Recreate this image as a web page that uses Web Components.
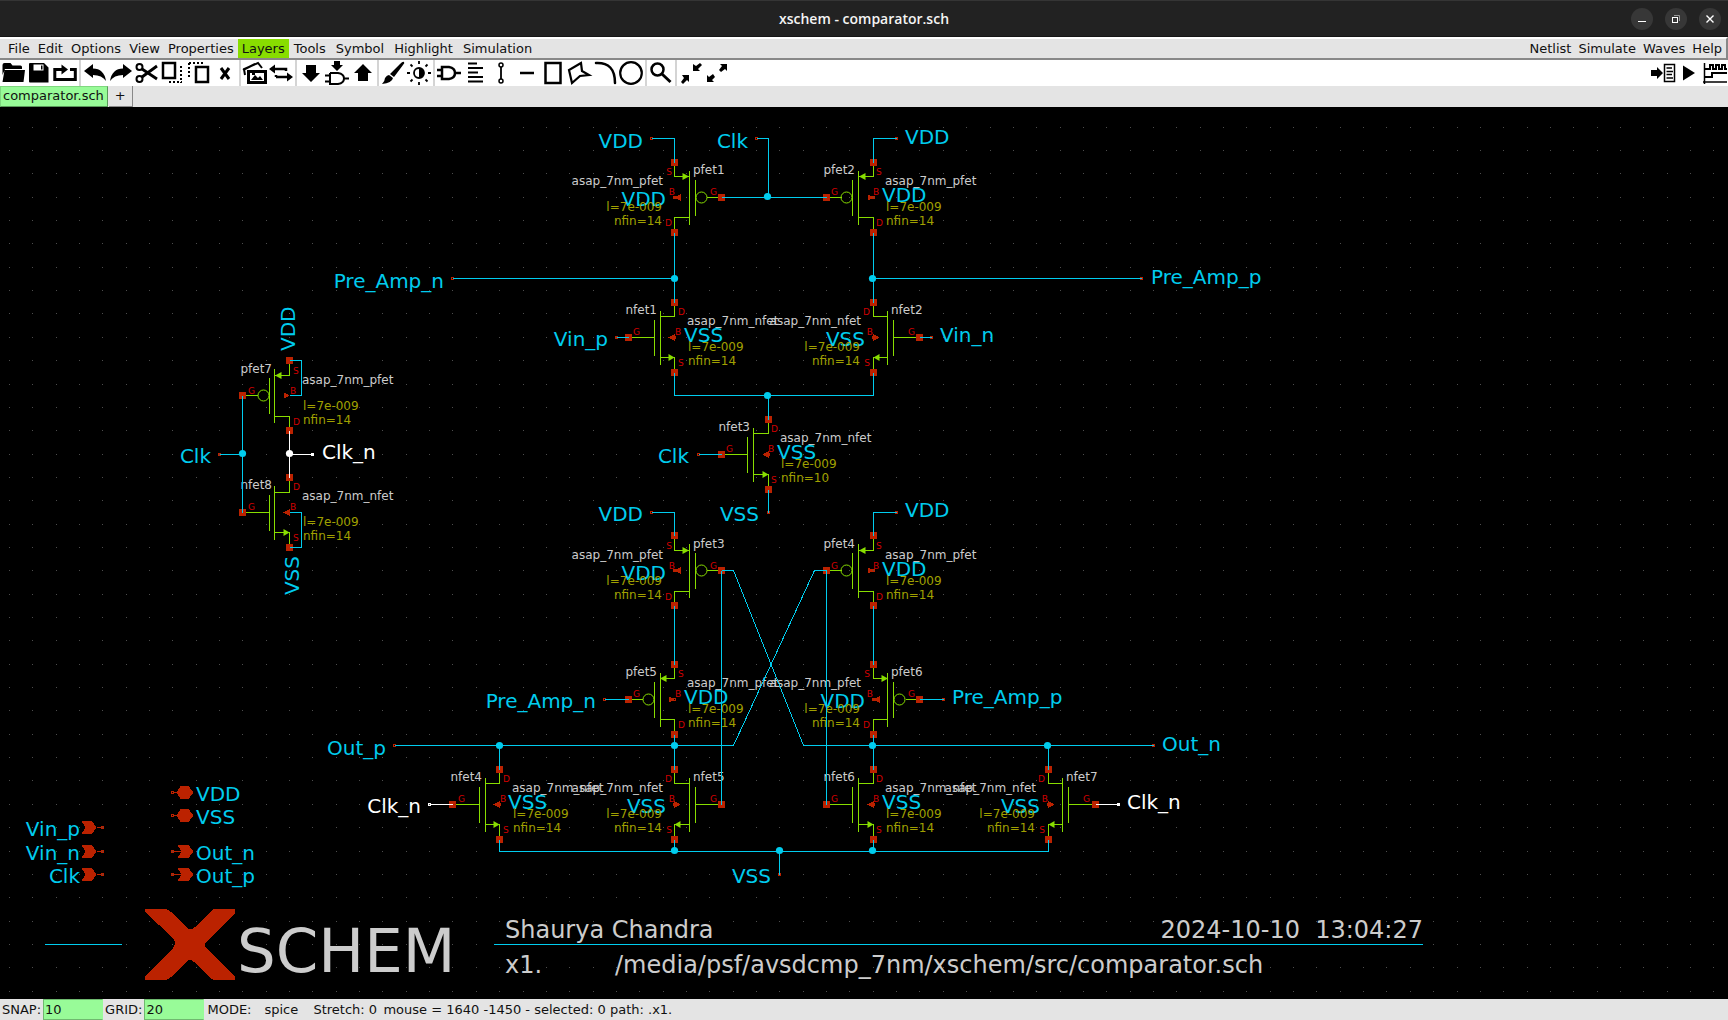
<!DOCTYPE html>
<html lang="en">
<head>
<meta charset="utf-8">
<title>xschem - comparator.sch</title>
<style>
  html, body { margin: 0; height: 100%; background: #000; }
  body { font: 13px/18px "DejaVu Sans", sans-serif; color: #111; }
</style>
</head>
<body>
<xs-window>
  <xs-titlebar>xschem - comparator.sch</xs-titlebar>
  <xs-menubar></xs-menubar>
  <xs-toolbar></xs-toolbar>
  <xs-tabs></xs-tabs>
  <xs-schematic></xs-schematic>
  <xs-status></xs-status>
</xs-window>

<script>
function define(name, css, html) {
  customElements.define(name, class extends HTMLElement {
    constructor() {
      super();
      const root = this.attachShadow({ mode: 'open' });
      root.innerHTML = '<style>:host,*{box-sizing:border-box}' + css + '</style>' + (typeof html === 'function' ? html() : html);
    }
  });
}

define('xs-window', `:host{display:flex;flex-direction:column;height:100vh;overflow:hidden}`, `<slot></slot>`);

/* ---------- title bar ---------- */
define('xs-titlebar', `
  :host{display:grid;grid-template-columns:1fr auto 1fr;align-items:center;flex:none;height:37px;background:#222;border-top:1px solid #353535;border-bottom:1px solid #161616;color:#f4f4f4}
  h1{grid-column:2;margin:0;font:600 14px/20px "Open Sans","Noto Sans",sans-serif}
  div{justify-self:end;display:flex;gap:12px;padding-right:7px}
  button{width:22px;height:22px;padding:0;border:0;border-radius:50%;background:#373737}
  svg{display:block}`,
  `<h1><slot></slot></h1><div>
  <button aria-label="Minimize"><svg width="22" height="22"><path d="M7 13.5h8" stroke="#fff"/></svg></button>
  <button aria-label="Restore"><svg width="22" height="22" fill="none"><path d="M9 7.5h5.5V13" stroke="#999"/><rect x="7.500" y="9.500" width="5" height="5" stroke="#fff"/></svg></button>
  <button aria-label="Close"><svg width="22" height="22"><path d="M7.500 7.500l7 7m0-7l-7 7" stroke="#fff" stroke-width="1.400"/></svg></button></div>`);

/* ---------- menus ---------- */
define('xs-menubar', `
  :host{display:flex;justify-content:space-between;flex:none;height:23px;background:#e4e4e4;border-top:2px solid #fff;border-bottom:2px solid #888;border-right:2px solid #888}
  nav{display:flex;padding-left:4px}
  button{border:0;padding:0 4px;background:none;color:#111;font:13px/19px "DejaVu Sans",sans-serif}
  .on{background:#8d0}
  .on~button{padding:0 5px}
  nav+nav{padding:0 1px 0 0}
  nav+nav button{padding:0 3px 0 4px}`,
  () => {
    const m = s => s.split(' ').map(t => `<button class="${t === 'Layers' ? 'on' : ''}">${t}</button>`).join('');
    return `<nav>${m('File Edit Options View Properties Layers Tools Symbol Highlight Simulation')}</nav><nav>${m('Netlist Simulate Waves Help')}</nav>`;
  });

/* ---------- tool buttons, 24x24 drawings ---------- */
const icons = {
  Open: '<path fill="#000" stroke="none" d="M1.500 4q0-2 2-2h6l2 2.500h8q1.500 0 1.500 1.500v2H4L1.500 14zM3.500 9H24l-1.500 12H1.500z"/>',
  Save: '<path fill="#000" stroke="none" fill-rule="evenodd" d="M3 2h14l4.500 4.500V21.500H3q-1 0-1-1V3q0-1 1-1zM6.500 3.500v6h10v-6zM14 4.500h1.500v4H14z"/>',
  Reload: '<path stroke-width="3" d="M9 8.500H1.800v10h20.500v-10H17"/><path stroke="none" fill="#000" d="M8.500 3.500l6.500 5-6.500 5z"/>',
  '|1': '',
  Undo: '<path stroke="none" fill="#000" d="M1 10l9-7v4.500q11 0 13 12.500-4-6-13-6V17z"/>',
  Redo: '<path stroke="none" fill="#000" d="M23 10l-9-7v4.500Q3 7.500 1 20q4-6 13-6V17z"/>',
  Cut: '<circle cx="4.500" cy="6" r="3" stroke-width="2"/><circle cx="4.500" cy="18" r="3" stroke-width="2"/><path stroke-width="2.800" d="M7 8l15 10M7 16L22 5"/>',
  Copy: '<rect x="2" y="2" width="12" height="15"/><path stroke-width="2" stroke-dasharray="2 2" d="M20 5v17M8 21h13"/>',
  Move: '<rect x="9" y="6" width="12" height="15"/><path stroke-width="2" stroke-dasharray="2 2" d="M2 2v15M2 2h14"/>',
  Delete: '<path stroke-width="3" d="M8 7l8 11M16 7L8 18"/>',
  '|2': '',
  Pictures: '<path stroke-width="2" d="M2 14L1 8l14-6 4 5M0 9l12-6"/><path stroke="none" fill="#000" fill-rule="evenodd" d="M4 9h20v14H4zM7 12v8h14v-8zM8 19l4-5 3 3 2-2 3 4zM9 12h3v2H9z"/>',
  Swap: '<path stroke-width="2.500" d="M5 8h12v2M7 16h12M7 16v-2"/><path stroke="none" fill="#000" d="M0 8l6-4.500v9zM24 16l-6-4.500v9z"/>',
  '|3': '',
  Descend: '<path stroke="none" fill="#000" d="M7 4h10v8h4l-9 9-9-9h4z"/>',
  'Descend symbol': '<path stroke="none" fill="#000" d="M9 0h6v4h3l-6 6-6-6h3z"/><path stroke-width="2" d="M5 12v12M5 12h8q6 1 6 5.500T13 23H5M0 14.500h5M0 20.500h5M19 17.500h5"/>',
  Ascend: '<path stroke="none" fill="#000" d="M7 20h10v-8h4l-9-9-9 9h4z"/>',
  '|4': '',
  Paint: '<path stroke="none" fill="#000" d="M23 1q1 1-1 3l-9 12-4-3L19 3q3-3 4-2zM8 14l4 3q-1 5-11 6 3-3 3-6 2-3 4-3z"/>',
  Contrast: '<circle cx="12" cy="12" r="5" stroke-width="1.800"/><path stroke="none" fill="#000" d="M12 7a5 5 0 010 10z"/><path stroke-width="1.800" d="M12 0v3M12 21v3M0 12h3M21 12h3M3.500 3.500l2 2M18.500 18.500l2 2M3.500 20.500l2-2M18.500 5.500l2-2"/>',
  '|5': '',
  Symbol: '<path d="M5 6v12h7q6-1 6-6t-6-6zM0 9h5M0 15h5M18 12h6"/>',
  Text: '<path stroke-width="2" d="M5 2.500h9M5 7h15M5 11.500h10M5 16h15M5 20.500h15"/>',
  Wire: '<circle cx="12" cy="4" r="2" stroke-width="1.500"/><circle cx="12" cy="20" r="2" stroke-width="1.500"/><path stroke-width="1.800" d="M12 6v12"/>',
  Line: '<path d="M5 12h14"/>',
  Rectangle: '<rect x="4.500" y="2" width="15" height="20"/>',
  Polygon: '<path stroke-width="2.200" d="M14 2L2 9l3 13 8-7 9-1-7-4z"/>',
  Arc: '<path d="M3 2Q22 1 22 22" stroke-linecap="round"/>',
  Circle: '<circle cx="12" cy="12" r="10.800" stroke-width="2.200"/>',
  '|6': '',
  Zoom: '<circle cx="8.500" cy="8.500" r="6"/><path stroke-width="3" d="M13 13l8.500 8"/>',
  '|7': '',
  'Zoom full': '<path stroke="none" fill="#000" d="M3 14h7v7l-2-2-4 4-2-2 3-4zM14 3v7h7l-2-2 4-4-2-2-4 3z"/>',
  'Zoom out': '<path stroke="none" fill="#000" d="M15 3h7v7l-2-2-4 3-2-2 3-4zM2 14v7h7l-2-2 3-3-2-3-4 3z"/>'
};
const runIcons = {
  Netlist: '<path stroke="none" fill="#000" d="M0 9h6V6l6 6-6 6v-3H0z"/><rect x="13.500" y="3.500" width="10" height="17" stroke-width="1.500"/><path stroke-width="1.500" d="M15.500 7H21M15.500 10.500H22M15.500 13.500H21M15.500 17H22"/>',
  Simulate: '<path stroke="none" fill="#000" d="M6 4.500l12 7.500-12 7.500z"/>',
  Waves: '<path stroke-width="1.500" d="M1.500 2v21M0 21h24"/><path stroke-width="2" d="M1 8h6V4h3v4h3V4h3v4h3V4h3v4h2M1 16h8v-4h15"/>'
};
define('xs-toolbar', `
  :host{display:flex;justify-content:space-between;flex:none;height:26px;background:#fff}
  div{display:flex}
  button{width:26px;height:26px;padding:1px;border:0;background:none}
  i{width:2px;margin:0 1px;background:#d4d4d4}
  svg{display:block;fill:none;stroke:#000;stroke-width:2.500;overflow:visible}`,
  () => {
    const draw = set => Object.entries(set).map(([n, d]) => n[0] === '|' ? '<i></i>' :
      `<button aria-label="${n}"><svg width="24" height="24" viewBox="0 0 24 24">${d}</svg></button>`).join('');
    return `<div>${draw(icons)}</div><div>${draw(runIcons)}</div>`;
  });

/* ---------- tabs ---------- */
define('xs-tabs', `
  :host{display:flex;gap:1px;flex:none;height:21px;background:#e4e4e4}
  button{border:1px solid;border-width:0 1px 1px 0;border-color:#888;background:#e4e4e4;color:#111;font:13px/18px "DejaVu Sans",sans-serif}
  button.on{background:#98fb98;border-width:1px;border-color:#7fd87f #5a9a5a #5a9a5a #7fd87f;padding:0 3px 2px 2px}
  button:last-child{padding:0 6px}`,
  `<button class="on">comparator.sch</button><button aria-label="New tab">+</button>`);

/* ---------- status ---------- */
define('xs-status', `
  :host{display:flex;align-items:center;flex:none;height:21px;background:#e4e4e4;white-space:pre}
  label{padding:0 2px}
  input{width:60px;height:21px;padding:0 1px;border:1px solid #6fb96f;border-right-color:#98fb98;background:#98fb98;color:#111;font:13px/18px "DejaVu Sans",sans-serif;border-radius:0}
  .m{width:60px;padding-left:3px}.s{width:49px}.t{width:70px}`,
  `<label for="s">SNAP:</label><input id="s" value="10"><label for="g">GRID:</label><input id="g" value="20"><span class="m">MODE:</span><span class="s">spice</span><span class="t">Stretch: 0</span><span>mouse = 1640 -1450 - selected: 0 path: .x1.</span>`);

/* ---------- schematic ---------- */
const G = 11.675, X = k => 9.3 + G * k, Y = k => 20.15 + G * k, F = Math.floor;
const out = { grid: '', shape: '', wire: '', dot: '', text: '' };
const line = (pts, cls) => `<polyline class="${cls}" points="${pts.map(p => (F(p[0]) + .5) + ',' + (F(p[1]) + .5)).join(' ')}"/>`;
const text = (x, y, s, cls, end) => `<text x="${Math.round(x)}" y="${Math.round(y)}" class="${cls}${end ? ' e' : ''}">${s}</text>`;
const box = (x, y) => `<rect class="r" x="${F(x) - 3}" y="${F(y) - 3}" width="7" height="7"/>`;
const pin = (x, y, cls = 'p') => `<rect class="${cls}" x="${F(X(x)) - .5}" y="${F(Y(y)) - .5}" width="2" height="2"/>`;
const poly = (x, y, pts, cls) => `<polygon class="${cls}" points="${pts.map(p => (x + p[0]) + ',' + (y + p[1])).join(' ')}"/>`;

function wire(...a) {
  const cls = typeof a[0] === 'string' ? a.shift() : 'w', pts = [];
  for (let i = 0; i < a.length; i += 2) pts.push([X(a[i]), Y(a[i + 1])]);
  out.wire += line(pts, cls);
}
function dot(x, y, cls = 'd') {
  out.dot += `<circle class="${cls}" cx="${F(X(x) - 3.5) + 3.5}" cy="${F(Y(y) - 3.5) + 3.5}" r="3.600"/>`;
}
function label(x, y, s, left, cls = 'l', p = 'p') {
  out.text += pin(x, y, p) + text(X(x) + (left ? -8.75 : 8.75), Y(y) + (left ? 9 : 5), s, cls, left);
}
/* dir 1: gate on the left, dir -1: gate on the right */
function fet(name, x, y, dir, nfin = 14, body = true) {
  const p = name[0] === 'p', cx = X(x), cy = Y(y), m = v => cx + v * dir, flip = dir < 0;
  let s = '';
  s += line([[cx, cy - 35], [cx, cy - 20.4], [m(-14.6), cy - 20.4]], 'g');
  s += line([[m(-14.6), cy + 20.4], [cx, cy + 20.4], [cx, cy + 35]], 'g');
  s += line([[m(-14.6), cy - 27], [m(-14.6), cy + 27]], 'g');
  s += line([[m(-20.4), cy - 18], [m(-20.4), cy + 18]], 'g');
  s += line([[m(-4 * G), cy], [m(p ? -32 : -20.4), cy]], 'g');
  if (p) s += `<circle class="g" cx="${F(m(-26.3)) + .5}" cy="${F(cy) + .5}" r="5.500"/>`;
  const px = F(cx) + .5, py = F(cy) + .5, q = v => v * dir;
  s += p ? poly(px, F(cy - 20.4) + .5, [[q(-14.5), 0], [q(-8), -3.5], [q(-8), 3.5]], 'gf')
         : poly(px, F(cy + 20.4) + .5, [[q(0), 0], [q(-6), -3.5], [q(-6), 3.5]], 'gf');
  s += p ? poly(px, py, [[q(0), 0], [q(-6), -3.5], [q(-6), 3.5]], 'r') : poly(px, py, [[q(-6), 0], [q(0.5), -3.5], [q(0.5), 3.5]], 'r');
  s += box(cx, cy - 3 * G) + box(cx, cy + 3 * G) + box(m(-4 * G), cy);
  out.shape += s;
  const t = (dx, dy, str, cls, rev) => text(m(dx), cy + dy, str, cls, flip !== !!rev);
  if (body) label(x, y, p ? 'VDD' : 'VSS', flip);
  out.text += t(3, -22, p ? 'S' : 'D', 'k') + t(3, 29, p ? 'D' : 'S', 'k') + t(0, -2, 'B', 'k') + t(-42, -2, 'G', 'k')
    + t(-18, -23, name, 'n', true) + t(12, -12, 'asap_7nm_' + name.slice(0, 4), 'n')
    + t(13, 14, 'l=7e-009', 'y') + t(13, 28, 'nfin=' + nfin, 'y');
}

for (let j = 0; j < 70; j++) for (let i = 0; i < 130; i++) out.grid += `M${F(X(2 * i))} ${F(Y(2 * j))}h1v1h-1z`;

wire(55,1, 57,1, 57,3); wire(64,1, 65,1, 65,6); wire(74,3, 74,1, 76,1); wire(61,6, 70,6);
wire(38,13, 57,13); wire(74,13, 97,13); wire(57,9, 57,15); wire(74,9, 74,15);
wire(52,18, 53,18); wire(78,18, 79,18); wire(57,21, 57,23, 74,23, 74,21); wire(65,23, 65,25);
wire(59,28, 61,28); wire(65,31, 65,33); wire(55,33, 57,33, 57,35); wire(76,33, 74,33, 74,35);
wire(57,41, 57,46); wire(74,41, 74,46); wire(51,49, 53,49); wire(78,49, 80,49);
wire(57,52, 57,55); wire(74,52, 74,55); wire(33,53, 62,53, 69,38, 70,38); wire(98,53, 68,53, 62,38, 61,38);
wire(61,38, 61,58); wire(70,38, 70,58); wire(42,53, 42,55); wire(89,53, 89,55);
wire(42,61, 42,62, 89,62, 89,61); wire(57,61, 57,62); wire(74,61, 74,62); wire(66,62, 66,64);
wire('h', 36,58, 38,58); wire('h', 93,58, 95,58);
wire(24,20, 25,20, 25,23, 24,23); wire(24,33, 25,33, 25,36, 24,36); wire(20,23, 20,33); wire(18,28, 20,28);
wire('h', 24,26, 24,30); wire('h', 24,28, 26,28);
[[65,6],[57,13],[74,13],[65,23],[42,53],[57,53],[74,53],[89,53],[57,62],[66,62],[74,62],[20,28]].forEach(p => dot(...p));
dot(24, 28, 'hd');

label(55,1,'VDD',1); label(64,1,'Clk',1); label(76,1,'VDD'); label(38,13,'Pre_Amp_n',1); label(97,13,'Pre_Amp_p');
label(52,18,'Vin_p',1); label(79,18,'Vin_n'); label(59,28,'Clk',1); label(65,33,'VSS',1); label(55,33,'VDD',1); label(76,33,'VDD');
label(51,49,'Pre_Amp_n',1); label(80,49,'Pre_Amp_p'); label(33,53,'Out_p',1); label(98,53,'Out_n'); label(66,64,'VSS',1);
label(36,58,'Clk_n',1,'l hl','hp'); label(95,58,'Clk_n',0,'l hl','hp'); label(18,28,'Clk',1); label(26,28,'Clk_n',0,'l hl','hp');
const turned = (x, y, s, end) => `<text class="l${end ? ' e' : ''}" transform="translate(${x} ${y}) rotate(-90)">${s}</text>`;
out.text += turned(295, F(Y(20)) - 9, 'VDD') + turned(299, F(Y(36)) + 9, 'VSS', true);

fet('pfet1',57,6,-1); fet('pfet2',74,6,1); fet('nfet1',57,18,1); fet('nfet2',74,18,-1); fet('nfet3',65,28,1,10);
fet('pfet3',57,38,-1); fet('pfet4',74,38,1); fet('pfet5',57,49,1); fet('pfet6',74,49,-1);
fet('nfet4',42,58,1); fet('nfet5',57,58,-1); fet('nfet6',74,58,1); fet('nfet7',89,58,-1);
fet('pfet7',24,23,1,14,false); fet('nfet8',24,33,1,14,false);

/* ports */
function port(x, y, s, kind) {
  const cx = F(X(x)) + .5, cy = F(Y(y)) + .5;
  if (kind === 'in') {
    out.shape += poly(cx, cy, [[-21,-6.5],[-10.5,-6.5],[-6,0],[-10.5,6.5],[-21,6.5],[-17,0]], 'r') + line([[cx - 6, cy], [cx - 1, cy]], 'rl');
    out.text += text(cx - 23, cy + 8, s, 'l', true);
  } else {
    out.shape += kind === 'out' ? poly(cx, cy, [[5,-6.5],[16,-6.5],[21,0],[16,6.5],[5,6.5],[9,0]], 'r') : poly(cx, cy, [[4,0],[8,-6.5],[16,-6.5],[21,0],[16,6.5],[8,6.5]], 'r');
    out.shape += line([[cx + 1, cy], [cx + 9, cy]], 'rl');
    out.text += text(cx + 23, cy + 8, s, 'l');
  }
  out.text += pin(x, y);
}
port(8,60,'Vin_p','in'); port(8,62,'Vin_n','in'); port(8,64,'Clk','in');
port(14,57,'VDD','io'); port(14,59,'VSS','io'); port(14,62,'Out_n','out'); port(14,64,'Out_p','out');

/* title block */
out.wire += line([[44, 837], [121, 837]], 'w') + line([[493, 837], [1422, 837]], 'w');
out.shape += '<path class="r" d="M145 802h21q3 1 5 3l15 15q5 5 9 0l15-15q2-2 4-3h21v4l-29 29q-3 3 0 6l29 28v4h-21q-3-1-5-3l-15-15q-4-4-8 0l-15 15q-2 2-5 3h-21v-4l28-28q4-5 0-10L145 805z"/>';
out.text += text(237, 865, 'SCHEM', 'big') + text(505, 831, 'Shaurya Chandra', 'ti') + text(1423, 831, '2024-10-10&#160; 13:04:27', 'ti', true)
  + text(505, 866, 'x1.', 'ti') + text(615, 866, '/media/psf/avsdcmp_7nm/xschem/src/comparator.sch', 'ti');

define('xs-schematic', `
  :host{display:block;flex:1;min-height:0;background:#000;overflow:hidden}
  svg{display:block;width:100%;height:100%;font-family:"DejaVu Sans",sans-serif}
  polyline,rect{fill:none;shape-rendering:crispEdges}
  .w{stroke:#00ccee}.h{stroke:#fff}.g{stroke:#88dd00;fill:none}.gf{fill:#88dd00}.rl{stroke:#bb2200}
  .r{fill:#bb2200;shape-rendering:crispEdges}.p{stroke:#bb2200}.hp{stroke:#fff}.d{fill:#00ccee}.hd{fill:#fff}
  .l{font-size:20px;fill:#00ccee}.hl{fill:#fff}.n{font-size:12px;fill:#ccc}.y{font-size:12px;fill:#a0a000}.k{font-size:9px;fill:#d00000}
  .ti{font-size:24px;fill:#ccc}.big{font-size:61px;fill:#ccc}.e{text-anchor:end}`,
  () => `<svg role="img" aria-label="comparator schematic"><path d="${out.grid}" fill="#4d4d4d" shape-rendering="crispEdges"/>${out.shape}${out.text}${out.wire}${out.dot}</svg>`);
</script>
</body>
</html>
